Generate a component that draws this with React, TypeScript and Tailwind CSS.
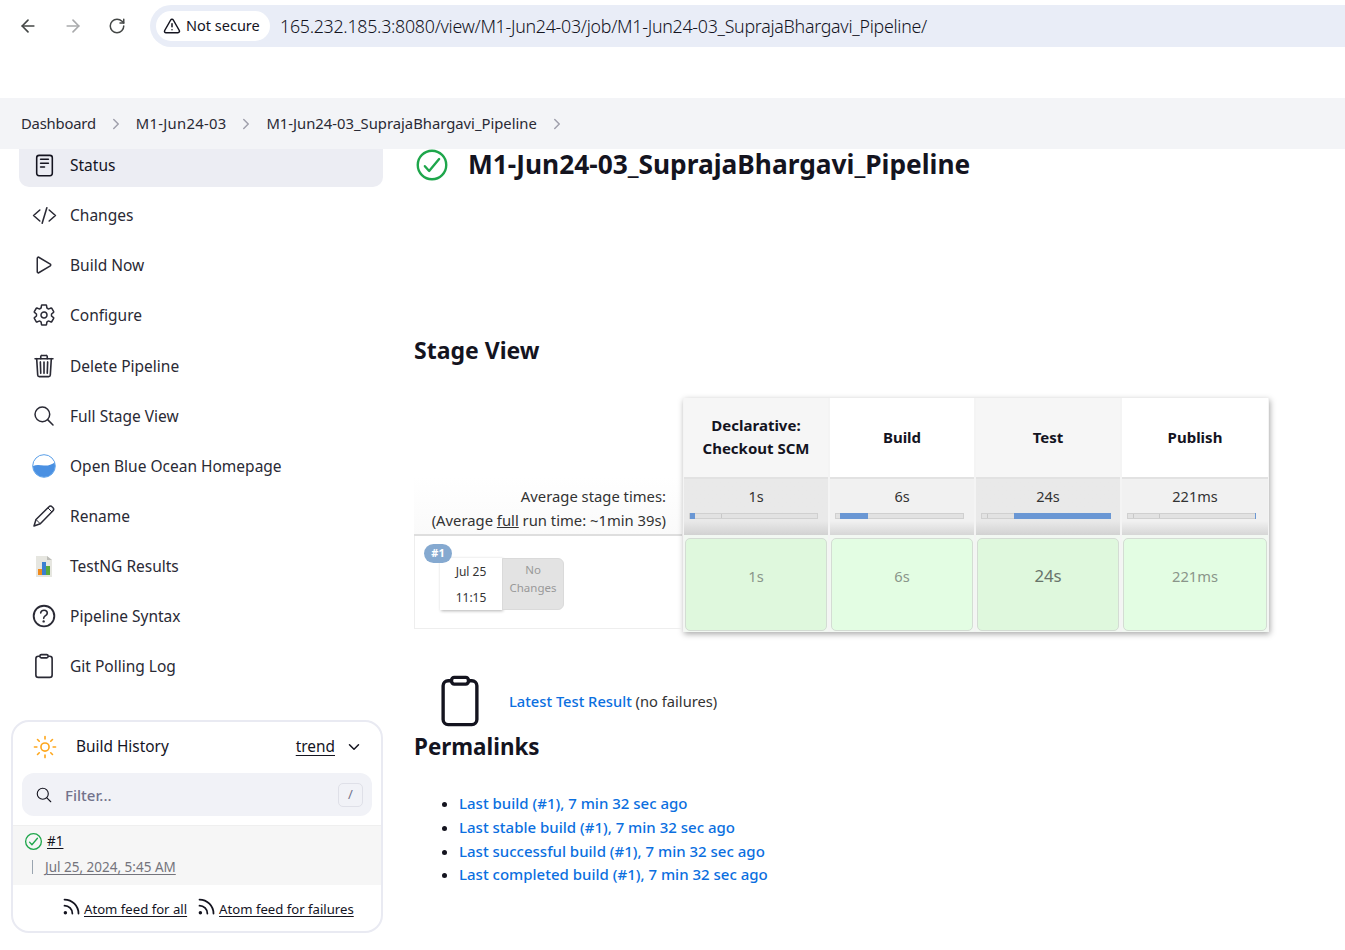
import React from 'react';
import { ArrowLeft, ArrowRight, RotateCw, TriangleAlert, Rss } from 'lucide-react';
import {
  IoReaderOutline,
  IoCodeSlashOutline,
  IoPlayOutline,
  IoSettingsOutline,
  IoTrashOutline,
  IoSearchOutline,
  IoHelpCircleOutline,
  IoClipboardOutline,
  IoSunnyOutline,
  IoChevronDown,
  IoChevronForward,
  IoCheckmarkCircleOutline,
} from 'react-icons/io5';

const BlueOceanIcon = () => (
  <svg width="24" height="24" viewBox="0 0 24 24">
    <defs>
      <clipPath id="ocean">
        <circle cx="12" cy="12" r="11" />
      </clipPath>
    </defs>
    <circle cx="12" cy="12" r="11" fill="#fff" />
    <path clipPath="url(#ocean)" d="M0 12.500C4 10 8 11 12 11.500s8-1 12-4V24H0z" fill="#4a90e2" />
    <circle cx="12" cy="12" r="11.300" fill="none" stroke="#5a9fe8" strokeWidth="1" />
  </svg>
);

const PencilIcon = () => (
  <svg width="24" height="24" viewBox="0 0 24 24" fill="none" stroke="currentColor" strokeWidth="1.500" strokeLinejoin="round">
    <path d="M2 22l2-6.500L17 2.700a2 2 0 0 1 3 0l1 1a2.200 2.200 0 0 1 0 3L8.300 19.800z" />
    <path d="M4 15.500l4.300 4.300M16 4l4 4" strokeWidth="1" />
  </svg>
);

const TestNgIcon = () => (
  <svg width="18" height="23" viewBox="0 0 18 23">
    <path d="M1 1h11l5 4v17H1z" fill="#e6e6e0" />
    <path d="M12 1l5 4h-5z" fill="#bdbdb8" />
    <rect x="3" y="14" width="4" height="6" fill="#f08a1d" />
    <rect x="7" y="7" width="4" height="13" fill="#3b7fd1" />
    <rect x="11" y="11" width="4" height="9" fill="#5aa93c" />
  </svg>
);

const navItems = [
  { label: 'Changes', icon: <IoCodeSlashOutline size={25} />, rowClass: 'h-[50px]' },
  { label: 'Build Now', icon: <IoPlayOutline size={24} />, rowClass: 'h-[50px]' },
  { label: 'Configure', icon: <IoSettingsOutline size={24} />, rowClass: 'h-[51px] pb-[1px]' },
  { label: 'Delete Pipeline', icon: <IoTrashOutline size={26} />, rowClass: 'h-[50px]' },
  { label: 'Full Stage View', icon: <IoSearchOutline size={24} />, rowClass: 'h-[50px]' },
  { label: 'Open Blue Ocean Homepage', icon: <BlueOceanIcon />, rowClass: 'h-[50px]' },
  { label: 'Rename', icon: <PencilIcon />, rowClass: 'h-[50px]' },
  { label: 'TestNG Results', icon: <TestNgIcon />, rowClass: 'h-[50px]' },
  { label: 'Pipeline Syntax', icon: <IoHelpCircleOutline size={30} />, rowClass: 'h-[50px]' },
  { label: 'Git Polling Log', icon: <IoClipboardOutline size={26} />, rowClass: 'h-[50px]' },
];

const stages = [
  { name: ['Declarative:', 'Checkout SCM'], avg: '1s', barLeft: 0, barWidth: 5, ticks: [31], head: 'bg-[#f6f6f6]', avgBg: 'from-[#e9e9e9] via-[#e9e9e9] via-75% to-[#d2d2d2]', cell: 'bg-[#dff8dd]', cellText: 'text-[#8a958a] text-[14.700px]' },
  { name: ['Build'], avg: '6s', barLeft: 4, barWidth: 28, ticks: [], head: 'bg-white', avgBg: 'from-[#f1f1f1] via-[#f1f1f1] via-75% to-[#d6d6d6]', cell: 'bg-[#e3fde3]', cellText: 'text-[#8a958a] text-[14.700px]' },
  { name: ['Test'], avg: '24s', barLeft: 32, barWidth: 97, ticks: [5], head: 'bg-[#f6f6f6]', avgBg: 'from-[#e9e9e9] via-[#e9e9e9] via-75% to-[#d2d2d2]', cell: 'bg-[#dff8dd]', cellText: 'text-[#69746a] text-[16.800px]' },
  { name: ['Publish'], avg: '221ms', barLeft: 127, barWidth: 1, ticks: [5, 31], head: 'bg-white', avgBg: 'from-[#f1f1f1] via-[#f1f1f1] via-75% to-[#d6d6d6]', cell: 'bg-[#e3fde3]', cellText: 'text-[#8a958a] text-[14.700px]' },
];

const permalinks = [
  'Last build (#1), 7 min 32 sec ago',
  'Last stable build (#1), 7 min 32 sec ago',
  'Last successful build (#1), 7 min 32 sec ago',
  'Last completed build (#1), 7 min 32 sec ago',
];

const Crumb = ({ text, textClass }: { text: string; textClass?: string }) => (
  <>
    <span className={textClass}>{text}</span>
    <IoChevronForward size={16} className="mx-[12px] text-[#a0a0ac]" />
  </>
);

const StageColumn = ({ stage }: { stage: (typeof stages)[number] }) => (
  <div className="flex flex-col border-x border-[#f4f4f4]">
    <div className={`h-[79px] pb-[1px] flex flex-col items-center justify-center text-[15px] leading-[23px] font-bold ${stage.head}`}>
      {stage.name.map((line) => (
        <span key={line}>{line}</span>
      ))}
    </div>
    <div className={`h-[58px] pl-[5px] pt-[6px] bg-gradient-to-b border-t-2 border-[#e2e2e2] ${stage.avgBg}`}>
      <div className="text-center text-[14.500px] leading-[22px] text-[#333] ml-[-5px]">{stage.avg}</div>
      <div className="relative w-[129px] h-[6px] mt-[6px] bg-[#e2e2e2] border border-[#d0d0d0]">
        {stage.ticks.map((tick) => (
          <div key={tick} className="absolute top-0 h-full w-px bg-[#c8c8c8]" style={{ left: tick }} />
        ))}
        <div className="absolute top-[-1px] h-[6px] bg-[#6a97d4]" style={{ left: stage.barLeft, width: stage.barWidth }} />
      </div>
    </div>
    <div className="h-[97px] pt-[3px] px-[1px] pb-[1px] bg-[#f2f8f2]">
      <div className={`h-full rounded-[5px] border border-[#d4dcd4] flex justify-center pt-[25px] leading-[24px] ${stage.cell} ${stage.cellText}`}>
        {stage.avg}
      </div>
    </div>
  </div>
);

const App: React.FC = () => {
  return (
    <div className="h-[950px] overflow-hidden bg-white text-[#14141f] font-['Noto_Sans',sans-serif]">
      {/* browser bar */}
      <div className="h-[98px] pt-[5px]">
        <div className="flex items-start">
          <div className="w-[150px] h-[42px] flex items-center pl-[18px] gap-[25px] text-[#444746]">
            <ArrowLeft size={20} />
            <ArrowRight size={20} className="text-[#a9aaac]" />
            <RotateCw size={18} />
          </div>
          <div className="flex-1 h-[42px] rounded-l-[21px] bg-[#e9edf7] flex items-center pl-[6px]">
            <div className="h-[30px] w-[114px] rounded-full bg-white flex items-center pl-[7px] gap-[5px] text-[14.500px] whitespace-nowrap">
              <TriangleAlert size={18} />
              <span>Not secure</span>
            </div>
            <div className="ml-[10px] text-[17.800px] font-light tracking-[-0.27px] whitespace-nowrap">
              165.232.185.3:8080/view/M1-Jun24-03/job/M1-Jun24-03_SuprajaBhargavi_Pipeline/
            </div>
          </div>
        </div>
      </div>

      {/* breadcrumb */}
      <div className="h-[51px] bg-[#f3f4f7] flex items-center pl-[21px] text-[14.800px] text-[#2a2a35]">
        <Crumb text="Dashboard" textClass="tracking-[-0.2px]" />
        <Crumb text="M1-Jun24-03" textClass="tracking-[0.27px]" />
        <Crumb text="M1-Jun24-03_SuprajaBhargavi_Pipeline" />
      </div>

      <div className="flex">
        {/* sidebar */}
        <aside className="w-[414px] shrink-0 pl-[11px] pr-[31px]">
          <div className="ml-[8px] h-[38px] rounded-b-[10px] bg-[#ecedf3] flex items-center pb-[6px] pl-[13px] gap-[14px] text-[15.500px]">
            <span className="w-[24px] flex justify-center [&>svg]:shrink-0"><IoReaderOutline size={25} /></span>
            <span className="mt-[2px]">Status</span>
          </div>
          <nav className="mt-[3px] ml-[8px] flex flex-col">
            {navItems.map((item) => (
              <div key={item.label} className={`flex items-center pl-[13px] gap-[14px] text-[15.500px] text-[#2a2a35] ${item.rowClass}`}>
                <span className="w-[24px] flex justify-center [&>svg]:shrink-0">{item.icon}</span>
                <span className="mt-[2px]">{item.label}</span>
              </div>
            ))}
          </nav>

          <div className="mt-[29px] h-[213px] rounded-[18px] border-2 border-[#e9eaf2]">
            <div className="h-[51px] flex items-center pb-[2px] pl-[19px] pr-[19px] text-[15.400px]">
              <IoSunnyOutline size={26} className="text-[#fea71d]" />
              <span className="ml-[18px] flex-1">Build History</span>
              <span className="underline underline-offset-[3px]">trend</span>
              <IoChevronDown size={16} className="ml-[11px]" />
            </div>
            <div className="mx-[9px] h-[43px] rounded-[12px] bg-[#f1f2f7] flex items-center pl-[13px] pr-[9px]">
              <IoSearchOutline size={18} />
              <span className="ml-[12px] mt-[2px] flex-1 text-[15px] font-medium text-[#73738c]">Filter...</span>
              <span className="w-[25px] h-[24px] rounded-[5px] border border-[#dfe0e8] flex items-center justify-center text-[13px] text-[#73738c]">/</span>
            </div>
            <div className="mt-[9px] h-[60px] bg-[#f6f6f6] border-t border-[#efefef] pt-[5px]">
              <div className="flex items-center pl-[10px] h-[20px] text-[13.500px]">
                <IoCheckmarkCircleOutline size={21} className="text-[#1ea64b]" />
                <span className="ml-[3px] underline underline-offset-[2px]">#1</span>
              </div>
              <div className="mt-[6px] ml-[19px] flex items-center">
                <span className="h-[14px] w-px bg-[#9aa5b0]" />
                <span className="ml-[12px] text-[13.500px] text-[#74747c] underline underline-offset-[2px] whitespace-nowrap">Jul 25, 2024, 5:45 AM</span>
              </div>
            </div>
            <div className="h-[46px] pt-[3px] flex items-center pl-[48px] text-[13.150px] whitespace-nowrap">
              <Rss size={21} className="mb-[6px]" />
              <span className="ml-[2px] underline underline-offset-[2px]">Atom feed for all</span>
              <Rss size={21} className="ml-[9px] mb-[6px]" />
              <span className="ml-[2px] underline underline-offset-[2px]">Atom feed for failures</span>
            </div>
          </div>
        </aside>

        {/* main */}
        <main className="flex-1">
          <div className="flex items-center h-[32px]">
            <IoCheckmarkCircleOutline size={38} className="text-[#1ea64b] ml-[-1px]" />
            <h1 className="ml-[17px] text-[26.300px] font-bold whitespace-nowrap">M1-Jun24-03_SuprajaBhargavi_Pipeline</h1>
          </div>

          <h2 className="mt-[153px] text-[23px] leading-[32px] font-bold">Stage View</h2>

          <div className="mt-[32px] flex items-start">
            <div className="w-[268px] pt-[79px]">
              <div className="h-[59px] pr-[16px] pt-[7px] text-right text-[14.800px] leading-[24px] text-[#333] bg-gradient-to-b from-white to-[#fafafa] border-b-2 border-[#dedede]">
                <div>Average stage times:</div>
                <div>(Average <span className="underline">full</span> run time: ~1min 39s)</div>
              </div>
              <div className="relative h-[93px] border border-t-0 border-[#eeeeee] pl-[25px] pt-[22px] flex items-start">
                <span className="absolute left-[9px] top-[8px] z-10 h-[19px] w-[28px] rounded-full bg-[#85a9d0] text-white text-[11px] font-bold flex items-center justify-center">#1</span>
                <div className="w-[62px] h-[52px] pt-[1px] bg-white shadow-[1px_1px_3px_rgba(0,0,0,0.3)] text-[12px] leading-[26px] text-center text-[#333]">
                  <div>Jul 25</div>
                  <div>11:15</div>
                </div>
                <div className="w-[62px] h-[52px] pt-[2px] bg-[#e3e3e3] border border-[#dadada] rounded-r-[6px] text-[11.500px] leading-[18px] text-center text-[#999]">
                  <div>No</div>
                  <div>Changes</div>
                </div>
              </div>
            </div>
            <div className="ml-[1px] grid grid-cols-[146px_146px_146px_148px] shadow-[1px_2px_6px_rgba(0,0,0,0.35)]">
              {stages.map((stage) => (
                <StageColumn key={stage.avg} stage={stage} />
              ))}
            </div>
          </div>

          <div className="mt-[42px] flex items-start">
            <IoClipboardOutline size={54} className="ml-[19px]" />
            <div className="ml-[22px] mt-[15px] text-[14.700px] leading-[24px] text-[#333]">
              <span className="text-[#0b6fdf] font-medium">Latest Test Result</span> (no failures)
            </div>
          </div>

          <h2 className="mt-[3px] text-[22.400px] leading-[32px] font-bold">Permalinks</h2>

          <ul className="mt-[29px] ml-[45px] list-disc text-[15px] font-medium leading-[23.800px] text-[#0b6fdf] marker:text-[#14141f]">
            {permalinks.map((link) => (
              <li key={link}>{link}</li>
            ))}
          </ul>
        </main>
      </div>
    </div>
  );
};

export default App;
